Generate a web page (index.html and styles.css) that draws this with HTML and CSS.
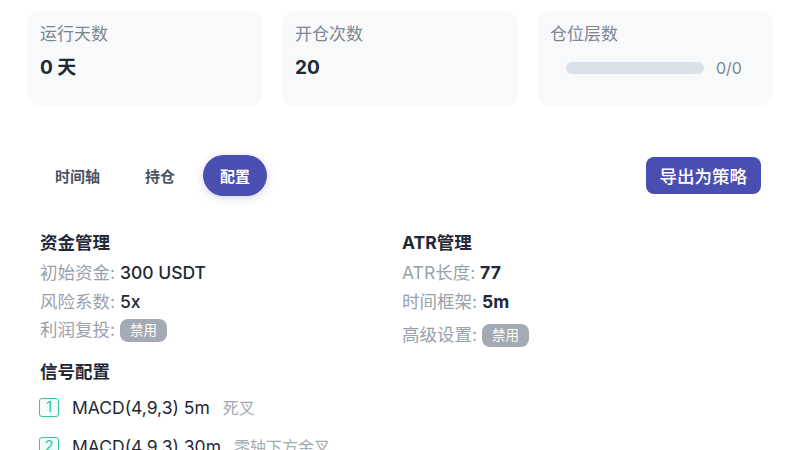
FILE: index.html
```html
<!DOCTYPE html>
<html lang="zh-CN">
<head>
<meta charset="utf-8">
<title>策略详情</title>
<link rel="stylesheet" href="styles.css">
</head>
<body>
<div class="page">
  <section class="stats">
    <div class="stat-card">
      <div class="stat-label">运行天数</div>
      <div class="stat-value">0 天</div>
    </div>
    <div class="stat-card">
      <div class="stat-label">开仓次数</div>
      <div class="stat-value">20</div>
    </div>
    <div class="stat-card">
      <div class="stat-label">仓位层数</div>
      <div class="layer-row">
        <div class="layer-bar"><div class="layer-fill" style="width:0%"></div></div>
        <span class="layer-text">0/0</span>
      </div>
    </div>
  </section>

  <div class="toolbar">
    <nav class="tabs">
      <button class="tab">时间轴</button>
      <button class="tab">持仓</button>
      <button class="tab active">配置</button>
    </nav>
    <button class="export-btn">导出为策略</button>
  </div>

  <section class="config">
    <div class="config-grid">
      <div class="group">
        <h3 class="group-title">资金管理</h3>
        <div class="row"><span class="key">初始资金:</span> <span class="val">300 USDT</span></div>
        <div class="row"><span class="key">风险系数:</span> <span class="val">5x</span></div>
        <div class="row"><span class="key">利润复投:</span> <span class="tag">禁用</span></div>
      </div>
      <div class="group">
        <h3 class="group-title">ATR管理</h3>
        <div class="row"><span class="key">ATR长度:</span> <span class="val strong">77</span></div>
        <div class="row"><span class="key">时间框架:</span> <span class="val strong">5m</span></div>
        <div class="row row-tag"><span class="key">高级设置:</span> <span class="tag">禁用</span></div>
      </div>
    </div>

    <div class="group signals">
      <h3 class="group-title">信号配置</h3>
      <ul class="signal-list">
        <li class="signal"><span class="num">1</span><span class="sig-name">MACD(4,9,3) 5m</span><span class="sig-cond">死叉</span></li>
        <li class="signal"><span class="num">2</span><span class="sig-name">MACD(4,9,3) 30m</span><span class="sig-cond">零轴下方金叉</span></li>
      </ul>
    </div>
  </section>
</div>
</body>
</html>
```

FILE: styles.css
```css
* { box-sizing: border-box; }

html, body {
  margin: 0;
  background: #ffffff;
  font-family: "Inter", "Noto Sans CJK SC", "Liberation Sans", sans-serif;
  color: #1f2937;
}

.page {
  padding: 11px 26px 0 27px;
}

/* summary cards */
.stats {
  display: grid;
  grid-template-columns: repeat(3, 1fr);
  gap: 19px;
}

.stat-card {
  height: 95px;
  background: #f8f9fa;
  border-radius: 14px;
  padding: 11px 13px;
}

.stat-label {
  font-size: 17px;
  line-height: 24px;
  color: #7d8590;
}

.stat-value {
  margin-top: 10px;
  font-size: 19px;
  line-height: 24px;
  font-weight: 700;
  color: #1f2937;
}

.layer-row {
  display: flex;
  align-items: center;
  gap: 12px;
  margin-top: 12px;
  padding-left: 16px;
}

.layer-bar {
  width: 138px;
  height: 12px;
  border-radius: 6px;
  background: #dbe1e8;
  overflow: hidden;
}

.layer-fill {
  height: 100%;
  background: #4a4fb0;
}

.layer-text {
  font-size: 16px;
  color: #7d8590;
}

/* tabs + export */
.toolbar {
  display: flex;
  align-items: center;
  justify-content: space-between;
  margin-top: 49px;
  padding: 0 12px 0 11px;
}

.tabs {
  display: flex;
  gap: 11px;
}

.tab {
  height: 41px;
  padding: 0 17px;
  border: none;
  border-radius: 21px;
  background: transparent;
  font-family: inherit;
  font-size: 15px;
  font-weight: 700;
  color: #4b5563;
  cursor: pointer;
}

.tab.active {
  background: #4a4eb0;
  color: #ffffff;
  box-shadow: 0 2px 8px rgba(74, 78, 176, 0.25);
}

.export-btn {
  height: 37px;
  padding: 0 14px;
  border: none;
  border-radius: 8px;
  background: #4a4eb0;
  color: #ffffff;
  font-family: inherit;
  font-size: 17.5px;
  font-weight: 500;
  cursor: pointer;
}

/* configuration */
.config {
  padding: 0 13px;
  margin-top: 35px;
}

.config-grid {
  display: grid;
  grid-template-columns: 362px 1fr;
}

.group-title {
  margin: 0 0 4px;
  font-size: 17.5px;
  line-height: 24px;
  font-weight: 700;
  color: #1f2937;
}

.row {
  font-size: 17.5px;
  line-height: 28.5px;
  color: #9aa1ab;
}

.key { color: #9aa1ab; }

.val {
  color: #1f2937;
  font-weight: 500;
}

.val.strong { font-weight: 700; }

.row-tag { margin-top: 5px; }

.tag {
  display: inline-block;
  vertical-align: 1px;
  padding: 0 10px;
  height: 23px;
  line-height: 23px;
  border-radius: 8px;
  background: #a3aab4;
  color: #ffffff;
  font-size: 13.5px;
}

.signals {
  margin-top: 10px;
}

.signal-list {
  list-style: none;
  margin: 4px 0 0;
  padding: 0;
}

.signal {
  display: flex;
  align-items: center;
  height: 39px;
}

.num {
  width: 20px;
  height: 19px;
  border: 1.5px solid #35c3a0;
  border-radius: 3px;
  background: #f3fcf9;
  color: #35c3a0;
  font-size: 15px;
  line-height: 16px;
  text-align: center;
  margin-left: -1px;
}

.sig-name {
  margin-left: 13px;
  font-size: 17.5px;
  color: #1f2937;
}

.sig-cond {
  margin-left: 13px;
  font-size: 16px;
  color: #a3aab4;
}
```
